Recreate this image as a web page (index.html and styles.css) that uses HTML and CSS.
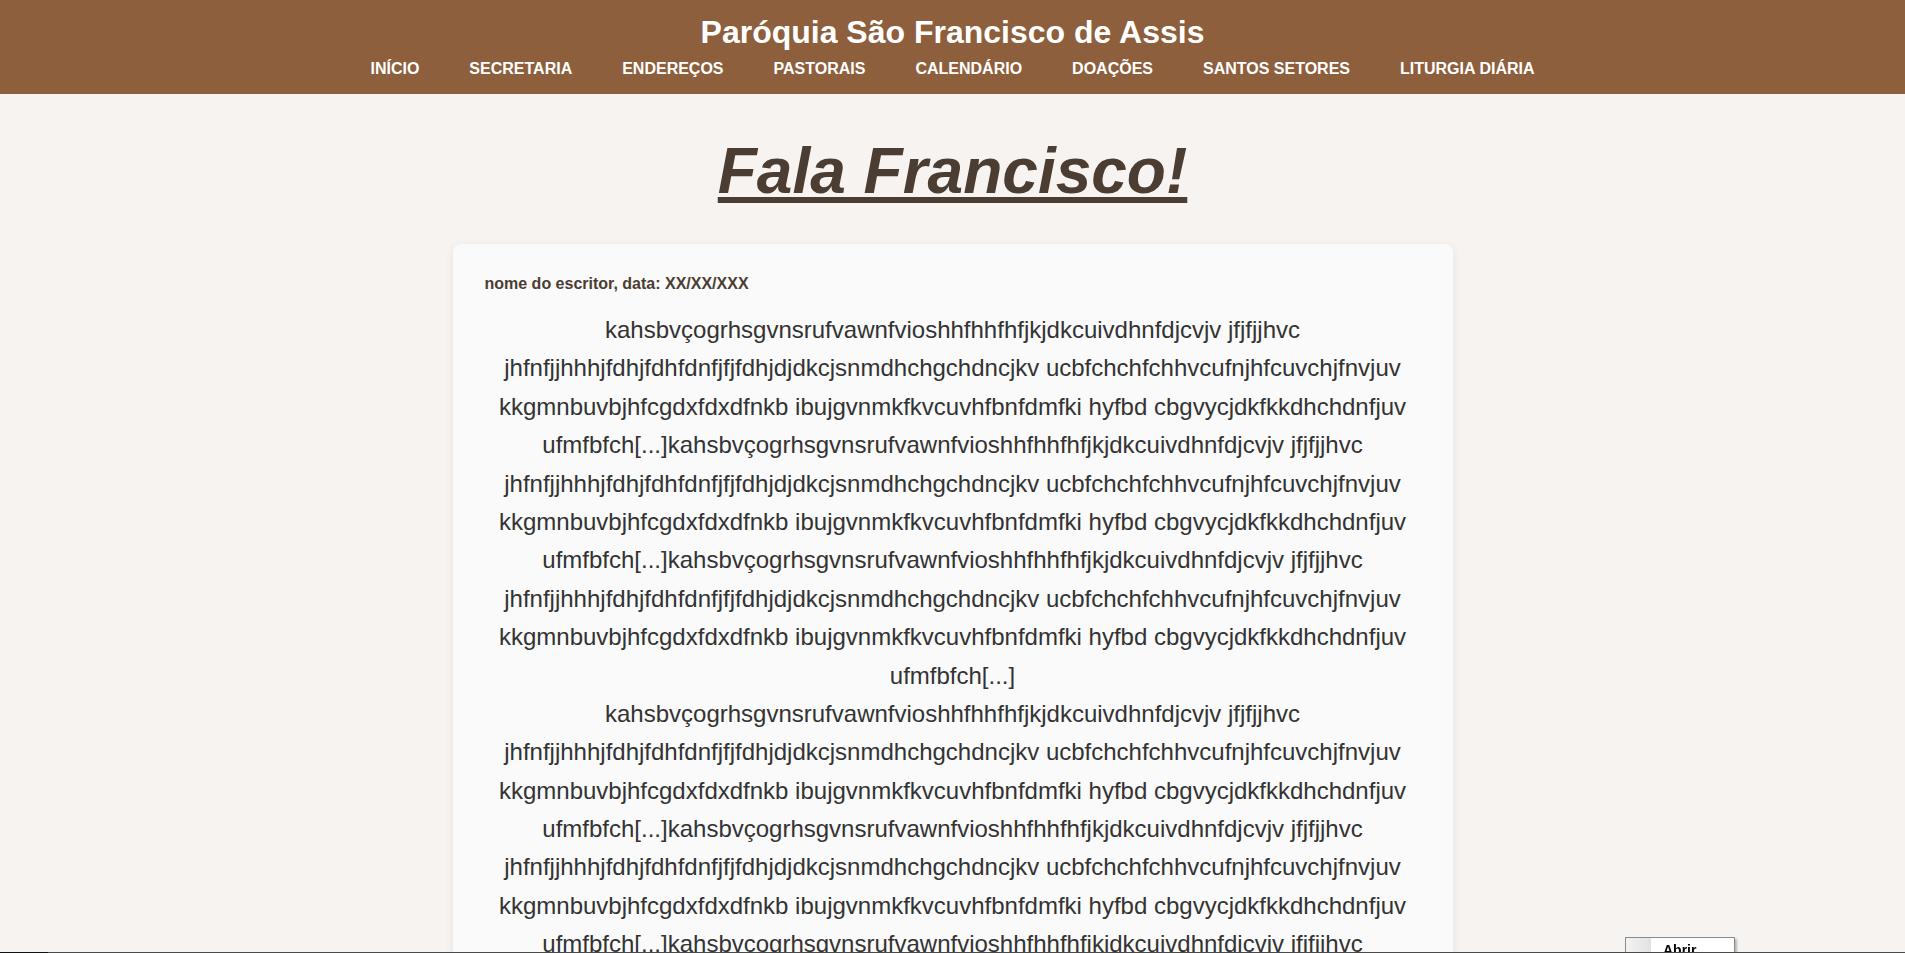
FILE: index.html
```html
<!DOCTYPE html>
<html lang="pt-BR">
<head>
<meta charset="utf-8">
<title>Fala Francisco!</title>
<link rel="stylesheet" href="styles.css">
</head>
<body>
<header class="site-header">
  <h1 class="site-title">Paróquia São Francisco de Assis</h1>
  <nav class="main-nav">
    <a href="#">INÍCIO</a>
    <a href="#">SECRETARIA</a>
    <a href="#">ENDEREÇOS</a>
    <a href="#">PASTORAIS</a>
    <a href="#">CALENDÁRIO</a>
    <a href="#">DOAÇÕES</a>
    <a href="#">SANTOS SETORES</a>
    <a href="#">LITURGIA DIÁRIA</a>
  </nav>
</header>
<main class="content">
  <h2 class="page-title">Fala Francisco!</h2>
  <article class="card">
    <p class="meta">nome do escritor, data: XX/XX/XXX</p>
    <p class="body-text">kahsbvçogrhsgvnsrufvawnfvioshhfhhfhfjkjdkcuivdhnfdjcvjv jfjfjjhvc jhfnfjjhhhjfdhjfdhfdnfjfjfdhjdjdkcjsnmdhchgchdncjkv ucbfchchfchhvcufnjhfcuvchjfnvjuv kkgmnbuvbjhfcgdxfdxdfnkb ibujgvnmkfkvcuvhfbnfdmfki hyfbd cbgvycjdkfkkdhchdnfjuv ufmfbfch[...]kahsbvçogrhsgvnsrufvawnfvioshhfhhfhfjkjdkcuivdhnfdjcvjv jfjfjjhvc jhfnfjjhhhjfdhjfdhfdnfjfjfdhjdjdkcjsnmdhchgchdncjkv ucbfchchfchhvcufnjhfcuvchjfnvjuv kkgmnbuvbjhfcgdxfdxdfnkb ibujgvnmkfkvcuvhfbnfdmfki hyfbd cbgvycjdkfkkdhchdnfjuv ufmfbfch[...]kahsbvçogrhsgvnsrufvawnfvioshhfhhfhfjkjdkcuivdhnfdjcvjv jfjfjjhvc jhfnfjjhhhjfdhjfdhfdnfjfjfdhjdjdkcjsnmdhchgchdncjkv ucbfchchfchhvcufnjhfcuvchjfnvjuv kkgmnbuvbjhfcgdxfdxdfnkb ibujgvnmkfkvcuvhfbnfdmfki hyfbd cbgvycjdkfkkdhchdnfjuv ufmfbfch[...]</p>
    <p class="body-text">kahsbvçogrhsgvnsrufvawnfvioshhfhhfhfjkjdkcuivdhnfdjcvjv jfjfjjhvc jhfnfjjhhhjfdhjfdhfdnfjfjfdhjdjdkcjsnmdhchgchdncjkv ucbfchchfchhvcufnjhfcuvchjfnvjuv kkgmnbuvbjhfcgdxfdxdfnkb ibujgvnmkfkvcuvhfbnfdmfki hyfbd cbgvycjdkfkkdhchdnfjuv ufmfbfch[...]kahsbvçogrhsgvnsrufvawnfvioshhfhhfhfjkjdkcuivdhnfdjcvjv jfjfjjhvc jhfnfjjhhhjfdhjfdhfdnfjfjfdhjdjdkcjsnmdhchgchdncjkv ucbfchchfchhvcufnjhfcuvchjfnvjuv kkgmnbuvbjhfcgdxfdxdfnkb ibujgvnmkfkvcuvhfbnfdmfki hyfbd cbgvycjdkfkkdhchdnfjuv ufmfbfch[...]kahsbvçogrhsgvnsrufvawnfvioshhfhhfhfjkjdkcuivdhnfdjcvjv jfjfjjhvc jhfnfjjhhhjfdhjfdhfdnfjfjfdhjdjdkcjsnmdhchgchdncjkv ucbfchchfchhvcufnjhfcuvchjfnvjuv kkgmnbuvbjhfcgdxfdxdfnkb ibujgvnmkfkvcuvhfbnfdmfki hyfbd cbgvycjdkfkkdhchdnfjuv ufmfbfch[...]</p>
  </article>
</main>
<div class="tip-box"><span class="tip-icon"></span><span class="tip-label">Abrir</span></div>
<div class="bottom-strip"><span class="strip-dark"></span></div>
</body>
</html>
```

FILE: styles.css
```css
html, body {
  margin: 0;
  padding: 0;
}
html {
  scrollbar-width: none;
}
html::-webkit-scrollbar {
  display: none;
}
body {
  background: #f6f3f0;
  font-family: "Liberation Sans", Arial, sans-serif;
  color: #333333;
}
.site-header {
  background: #8d5f3d;
  padding: 14px 0 15px;
  text-align: center;
}
.site-title {
  margin: 0;
  font-size: 32px;
  line-height: 36px;
  font-weight: bold;
  color: #ffffff;
}
.main-nav {
  margin-top: 9px;
  display: flex;
  justify-content: center;
  gap: 50px;
}
.main-nav a {
  color: #ffffff;
  text-decoration: none;
  font-weight: bold;
  font-size: 16px;
  line-height: 20px;
}
.content {
  display: flex;
  flex-direction: column;
  align-items: center;
}
.page-title {
  margin: 42px 0 0;
  font-size: 64px;
  line-height: 70px;
  font-style: italic;
  font-weight: bold;
  text-decoration: underline;
  color: #4b3d32;
}
.card {
  margin-top: 38px;
  width: 1000px;
  box-sizing: border-box;
  background: #fafafa;
  border-radius: 8px;
  box-shadow: 0 2px 8px rgba(0, 0, 0, 0.08);
  padding: 30px 32px;
}
.meta {
  margin: 0 0 17px;
  font-size: 16px;
  line-height: 20px;
  font-weight: bold;
  color: #4b3d32;
}
.body-text {
  margin: 0;
  font-size: 24px;
  line-height: 1.6;
  text-align: center;
  color: #333333;
}
.tip-box {
  position: fixed;
  left: 1625px;
  top: 937px;
  width: 110px;
  height: 20px;
  box-sizing: border-box;
  border: 1px solid #8a8a8a;
  background: #ffffff;
  box-shadow: 2px 2px 2px rgba(0, 0, 0, 0.25);
  display: flex;
}
.tip-icon {
  width: 25px;
  background: linear-gradient(to right, #f3f3f3, #e2e2e2);
}
.tip-label {
  padding-left: 12px;
  font-family: "Liberation Sans", Arial, sans-serif;
  font-size: 14px;
  font-weight: bold;
  line-height: 24px;
  color: #000000;
}
.bottom-strip {
  position: fixed;
  left: 0;
  right: 0;
  bottom: 0;
  height: 1px;
  background: #4a4a4a;
  display: flex;
}
.strip-dark {
  width: 48px;
  background: #111111;
}
```
